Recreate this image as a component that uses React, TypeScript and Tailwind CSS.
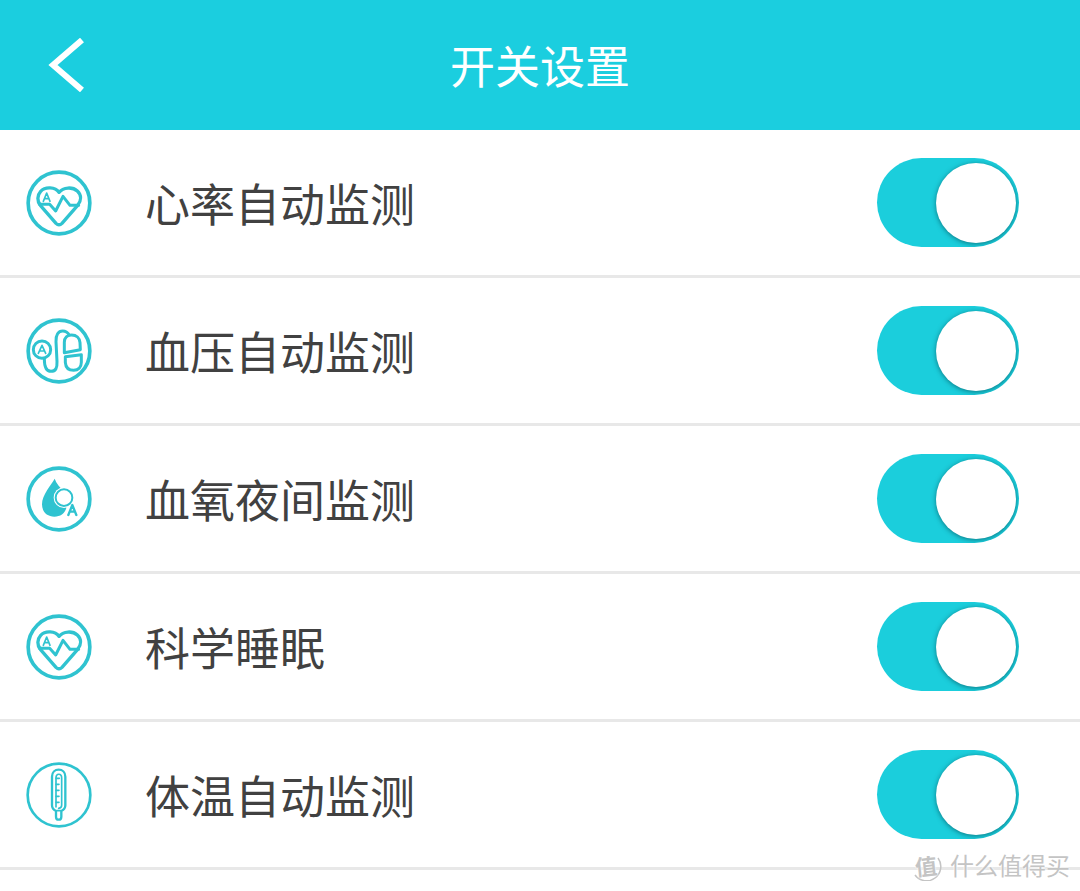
import { useState, type ReactNode } from "react";

function IconFrame({ ring, children }: { ring: number; children: ReactNode }) {
  return (
    <svg
      aria-hidden="true"
      viewBox="34 27 198 198"
      className="size-[66px] shrink-0 text-[#2fc3d0]"
      fill="none"
      stroke="currentColor"
      strokeLinecap="round"
      strokeLinejoin="round"
    >
      <circle cx="133" cy="126" r={98 - ring / 2} strokeWidth={ring} />
      {children}
    </svg>
  );
}

function HeartIcon() {
  return (
    <IconFrame ring={11}>
      <path
        d="M133 94C122 78 92 76 78 91C67 103 67 120 77 133L124 187Q133 196 142 187L189 133C200 119 201 102 188 90C174 77 146 78 133 94Z"
        strokeWidth="10"
      />
      <path d="M74 130H105L123 150L145 106L166 133H192" strokeWidth="9" />
      <path d="M86 121L96 96L106 121M90 113H103" strokeWidth="5" />
    </IconFrame>
  );
}

function PressureIcon() {
  return (
    <IconFrame ring={11}>
      <circle cx="82" cy="122" r="26" strokeWidth="9" />
      <path d="M71 133L82 109L93 133M75 126H89" strokeWidth="5" />
      <path
        d="M89 149C89 176 97 187 109 187C123 187 128 177 127 158L124 98C123 77 131 66 144 66C153 66 159 70 164 78"
        strokeWidth="9"
      />
      <path
        d="M149 129V100C149 86 158 78 171 78C185 78 195 87 196 101L197 122L149 131Z"
        strokeWidth="9"
      />
      <path
        d="M152 143L200 137V160C200 175 191 184 177 184C162 184 153 175 152 160Z"
        strokeWidth="9"
      />
    </IconFrame>
  );
}

function OxygenIcon() {
  return (
    <IconFrame ring={11}>
      <path
        d="M120 65C110 84 82 113 82 142C82 165 98 179 119 179C137 179 150 170 155 153L148 104C136 91 125 79 120 65Z"
        fill="currentColor"
        stroke="none"
      />
      <circle cx="148" cy="122" r="31" fill="#fff" stroke="none" />
      <path d="M161 174L173 148L185 174" stroke="#fff" strokeWidth="14" />
      <circle cx="148" cy="122" r="25" strokeWidth="6" />
      <path d="M161 174L173 144L185 174M165 164H181" strokeWidth="7" />
    </IconFrame>
  );
}

function ThermometerIcon() {
  return (
    <IconFrame ring={8}>
      <path
        d="M112 71C112 58 121 50 132 50C143 50 152 58 152 71V157Q152 169 140 174V191C140 203 124 203 124 191V174Q112 169 112 157Z"
        strokeWidth="7"
      />
      <path d="M124 162V75C124 60 141 60 141 75V157Q141 165 132 166" strokeWidth="5" />
      <path
        d="M124 76H134M124 94H133M124 112H133M124 130H133M124 148H133M126 173H138"
        strokeWidth="5"
      />
    </IconFrame>
  );
}

const settings = [
  { id: "heart-rate", label: "心率自动监测", Icon: HeartIcon },
  { id: "blood-pressure", label: "血压自动监测", Icon: PressureIcon },
  { id: "blood-oxygen", label: "血氧夜间监测", Icon: OxygenIcon },
  { id: "sleep", label: "科学睡眠", Icon: HeartIcon },
  { id: "temperature", label: "体温自动监测", Icon: ThermometerIcon },
];

function SettingRow({ id, label, Icon }: (typeof settings)[number]) {
  const [on, setOn] = useState(true);
  return (
    <li className="flex items-center border-b-3 border-[#e8e8e8] py-7 pr-[61px] pl-[26px]">
      <Icon />
      <label htmlFor={id} className="ml-[53px] flex-1 text-[45px] leading-[60px] text-[#414141]">
        {label}
      </label>
      <input
        id={id}
        type="checkbox"
        role="switch"
        checked={on}
        onChange={(e) => setOn(e.target.checked)}
        className="flex h-[89px] w-[142px] shrink-0 cursor-pointer appearance-none items-center overflow-hidden rounded-full bg-[#c8c8c8] px-[3px] before:size-20 before:rounded-full before:bg-white before:shadow-[0_1px_5px_rgba(0,60,70,0.6)] checked:justify-end checked:bg-[#1bcedc]"
      />
    </li>
  );
}

export default function App() {
  return (
    <div className="relative min-h-screen bg-white font-['Noto_Sans_CJK_SC',sans-serif]">
      <header className="grid h-[130px] grid-cols-[1fr_auto_1fr] items-center bg-[#1bcedf] text-white">
        <a href="#back" aria-label="返回" className="ml-12 w-9">
          <svg viewBox="0 0 36 54" className="h-[54px] w-9" fill="none" stroke="currentColor" strokeWidth="6">
            <path d="M34 2L5 27L34 52" />
          </svg>
        </a>
        <h1 className="text-[45px] leading-[60px] font-normal">开关设置</h1>
      </header>
      <ul>
        {settings.map((setting) => (
          <SettingRow key={setting.id} {...setting} />
        ))}
      </ul>
      <div className="absolute right-2.5 bottom-2 flex items-center gap-2 text-[24px] leading-9 text-[#c4c4c4] [text-shadow:0_0_2px_#fff,0_0_2px_#fff]">
        <span className="relative flex size-8 items-center justify-center">
          <svg aria-hidden="true" viewBox="0 0 32 32" className="absolute inset-0 size-8" fill="none" stroke="currentColor" strokeWidth="1.5">
            <path d="M28 9A14 14 0 0 1 5 26" />
          </svg>
          <span className="relative -rotate-6 text-[22px] font-bold">值</span>
        </span>
        <span>什么值得买</span>
      </div>
    </div>
  );
}
